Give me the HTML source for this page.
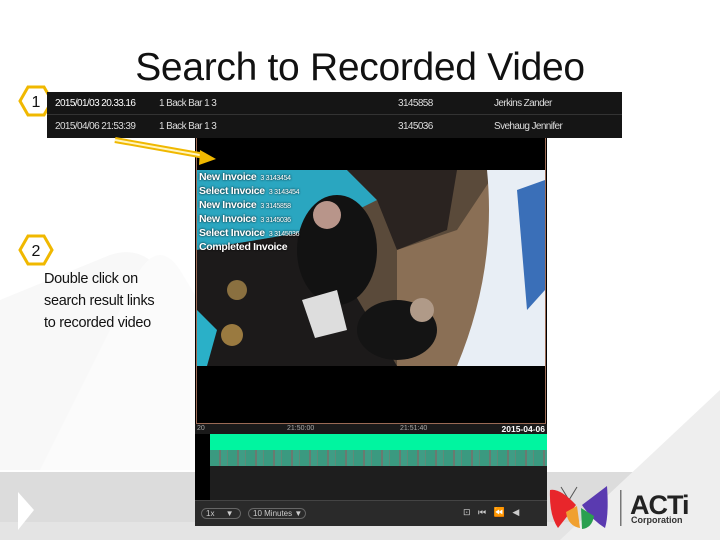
<!DOCTYPE html>
<html><head><meta charset="utf-8"><style>
*{margin:0;padding:0;box-sizing:border-box}
body{width:720px;height:540px;position:relative;overflow:hidden;background:#fff;font-family:"Liberation Sans",sans-serif}
.abs{position:absolute}
.title{left:0;width:720px;top:46px;text-align:center;font-size:39px;color:#111;font-family:"Liberation Sans",sans-serif;letter-spacing:-0.3px}
.tbl{left:47px;top:92px;width:575px;height:46px;background:#151515}
.tbl div{position:absolute;color:#ddd;font-size:10px;letter-spacing:-0.6px}
.ov{position:absolute;left:4px;color:#fff;font-weight:bold;font-size:10.5px;letter-spacing:-0.3px;text-shadow:0 0 2px #000}
.ov span{font-size:7px;font-weight:normal;margin-left:4px}
.txt{left:44px;top:268px;font-size:14.5px;line-height:22px;color:#111;letter-spacing:-0.3px}
</style></head><body>
<svg class="abs" style="left:0;top:0" width="720" height="540">
 <path d="M0 300 L110 255 Q140 245 160 270 L260 470 L0 470Z" fill="#f8f8f8"/>
 <path d="M40 470 L140 270 Q160 240 180 270 L210 320 L200 470Z" fill="#fbfbfb"/>
 <rect x="0" y="472" width="720" height="68" fill="#dcdcdc"/>
 <rect x="0" y="522" width="720" height="18" fill="#e4e4e4"/>
 <path d="M560 540 L720 390 L720 540Z" fill="#eeeeee"/>
 <path d="M18 492 L34 510 L18 530Z" fill="#fff"/>
 <polygon points="28,87 44,87 52,101 44,115 28,115 20,101" fill="#fff" stroke="#f0b800" stroke-width="3"/>
 <polygon points="28,236 44,236 52,250 44,264 28,264 20,250" fill="#fff" stroke="#f0b800" stroke-width="3"/>
 <text x="36" y="107" font-size="16" text-anchor="middle" fill="#111" font-family="Liberation Sans">1</text>
 <text x="36" y="256" font-size="16" text-anchor="middle" fill="#111" font-family="Liberation Sans">2</text>
</svg>
<div class="abs title">Search to Recorded Video</div>
<div class="abs tbl">
 <div style="left:8px;top:6px;color:#fff">2015/01/03 20.33.16</div>
 <div style="left:112px;top:6px">1 Back Bar 1 3</div>
 <div style="left:351px;top:6px">3145858</div>
 <div style="left:447px;top:6px">Jerkins Zander</div>
 <div style="left:0;top:22px;width:575px;height:1px;background:#333"></div>
 <div style="left:8px;top:29px">2015/04/06 21:53:39</div>
 <div style="left:112px;top:29px">1 Back Bar 1 3</div>
 <div style="left:351px;top:29px">3145036</div>
 <div style="left:447px;top:29px">Svehaug Jennifer</div>
</div>
<div class="abs" style="left:195px;top:138px;width:352px;height:388px;background:#000">
 <div class="abs" style="left:1px;top:0;width:350px;height:286px;border:1px solid #9a6a55;border-top:none"></div>
 <svg class="abs" style="left:2px;top:32px" width="348" height="196">
  <rect width="348" height="196" fill="#5a4a3a"/>
  <path d="M0 0 L150 0 L180 30 L120 60 L0 80Z" fill="#2aa6c0"/>
  <path d="M0 80 L120 60 L200 196 L0 196Z" fill="#1c1a1a"/>
  <path d="M150 0 L260 0 L250 60 L200 80 L180 30Z" fill="#2a2320"/>
  <path d="M200 80 L260 60 L300 0 L300 196 L200 196Z" fill="#8a6f55"/>
  <path d="M290 0 L348 0 L348 196 L260 196 Q300 100 290 0Z" fill="#e8eef5"/>
  <path d="M320 20 L348 10 L348 120 L330 140Z" fill="#3a6fb8"/>
  <path d="M0 140 L20 160 L10 196 L0 196Z" fill="#2ab0c8"/>
  <ellipse cx="140" cy="80" rx="40" ry="55" fill="#121212"/>
  <circle cx="130" cy="45" r="14" fill="#b8958a"/>
  <ellipse cx="200" cy="160" rx="40" ry="30" fill="#141414"/>
  <circle cx="225" cy="140" r="12" fill="#b09a88"/>
  <path d="M105 130 L140 120 L150 160 L118 168Z" fill="#ddd"/>
  <circle cx="40" cy="120" r="10" fill="#8a7040"/><circle cx="35" cy="165" r="11" fill="#9a7a40"/>
 </svg>
 <div class="ov" style="top:33px">New Invoice<span>3 3143454</span></div>
 <div class="ov" style="top:47px">Select Invoice<span>3 3143454</span></div>
 <div class="ov" style="top:61px">New Invoice<span>3 3145858</span></div>
 <div class="ov" style="top:75px">New Invoice<span>3 3145036</span></div>
 <div class="ov" style="top:89px">Select Invoice<span>3 3145036</span></div>
 <div class="ov" style="top:103px">Completed Invoice</div>
 <div class="abs" style="left:0;top:286px;width:352px;height:10px;background:#1a1a1a;color:#aaa;font-size:7px">
  <span class="abs" style="left:2px;top:1px">20</span><span class="abs" style="left:92px;top:1px">21:50:00</span><span class="abs" style="left:205px;top:1px">21:51:40</span>
  <span class="abs" style="right:2px;top:0;color:#fff;font-weight:bold;font-size:8.5px">2015-04-06</span></div>
 <div class="abs" style="left:15px;top:296px;width:337px;height:16px;background:#00f5a0"></div>
 <div class="abs" style="left:15px;top:312px;width:337px;height:16px;background:repeating-linear-gradient(90deg,#3a9a80 0 9px,#6a7a70 9px 11px,#3f9d85 11px 17px,#5f8a78 17px 18px)"></div>
 <div class="abs" style="left:15px;top:328px;width:337px;height:34px;background:#1e1e1e"></div>
 <div class="abs" style="left:0;top:362px;width:352px;height:26px;background:#2a2a2a;border-top:1px solid #444;color:#ccc;font-size:8px">
  <span class="abs" style="left:6px;top:7px;border:1px solid #666;border-radius:6px;width:40px;height:11px;padding-left:4px;line-height:9px">1x &nbsp;&nbsp;&nbsp;&nbsp;▼</span>
  <span class="abs" style="left:53px;top:7px;border:1px solid #666;border-radius:6px;width:58px;height:11px;padding-left:4px;line-height:9px">10 Minutes ▼</span>
  <span class="abs" style="left:268px;top:6px;font-size:9px">⊡ &nbsp; ⏮ &nbsp; ⏪ &nbsp; ◀</span>
 </div>
</div>
<svg class="abs" style="left:0;top:0" width="720" height="540">
 <path d="M115 140 L205 156" stroke="#f0b800" stroke-width="6"/>
 <path d="M115 140 L205 156" stroke="#fff5c0" stroke-width="2"/>
 <path d="M200 150 L216 159 L199 165Z" fill="#f0b800"/>
 <path d="M561 487 L569 500 L577 487" stroke="#555" stroke-width="1" fill="none"/>
 <path d="M550 490 Q560 488 576 505 L558 528 Q549 515 550 490Z" fill="#e8262b"/>
 <path d="M607 486 Q609 515 605 528 Q592 520 582 505Z" fill="#5a3ab0"/>
 <path d="M566 512 L577 506 L580 528 Q568 526 566 512Z" fill="#f0a030"/>
 <path d="M581 508 L594 516 Q592 528 582 529Z" fill="#2aa050"/>
 <rect x="620" y="490" width="1.5" height="36" fill="#777"/>
 <text x="630" y="514" font-size="27" font-weight="bold" fill="#222" font-family="Liberation Sans" letter-spacing="-1">ACTi</text>
 <text x="631" y="523" font-size="9" font-weight="bold" fill="#333" font-family="Liberation Sans">Corporation</text>
</svg>
<div class="abs txt">Double click on<br>search result links<br>to recorded video</div>
</body></html>
